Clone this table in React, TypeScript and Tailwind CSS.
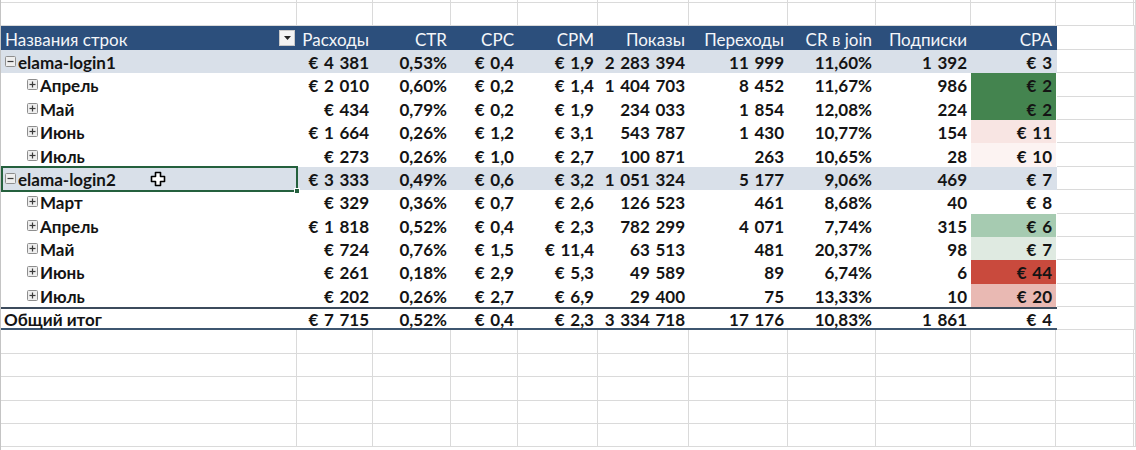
import React from "react";

const W = [
  "w-[296px]",
  "w-[76px]",
  "w-[78px]",
  "w-[67px]",
  "w-[80px]",
  "w-[91px]",
  "w-[99px]",
  "w-[88px]",
  "w-[95px]",
  "w-[85px]",
];

type Row = {
  label: string;
  level: 0 | 1 | 2;
  vals: string[];
  cpa?: string;
};

const n = (s: string) => s.replace(/ (?=\d)/g, "\u2004");

const ROWS: Row[] = [
  { label: "elama-login1", level: 0, vals: ["€ 4 381", "0,53%", "€ 0,4", "€ 1,9", "2 283 394", "11 999", "11,60%", "1 392", "€ 3"] },
  { label: "Апрель", level: 1, vals: ["€ 2 010", "0,60%", "€ 0,2", "€ 1,4", "1 404 703", "8 452", "11,67%", "986", "€ 2"], cpa: "bg-[#44844f]" },
  { label: "Май", level: 1, vals: ["€ 434", "0,79%", "€ 0,2", "€ 1,9", "234 033", "1 854", "12,08%", "224", "€ 2"], cpa: "bg-[#44844f]" },
  { label: "Июнь", level: 1, vals: ["€ 1 664", "0,26%", "€ 1,2", "€ 3,1", "543 787", "1 430", "10,77%", "154", "€ 11"], cpa: "bg-[#f8e5e3]" },
  { label: "Июль", level: 1, vals: ["€ 273", "0,26%", "€ 1,0", "€ 2,7", "100 871", "263", "10,65%", "28", "€ 10"], cpa: "bg-[#fcf3f2]" },
  { label: "elama-login2", level: 0, vals: ["€ 3 333", "0,49%", "€ 0,6", "€ 3,2", "1 051 324", "5 177", "9,06%", "469", "€ 7"] },
  { label: "Март", level: 1, vals: ["€ 329", "0,36%", "€ 0,7", "€ 2,6", "126 523", "461", "8,68%", "40", "€ 8"] },
  { label: "Апрель", level: 1, vals: ["€ 1 818", "0,52%", "€ 0,4", "€ 2,3", "782 299", "4 071", "7,74%", "315", "€ 6"], cpa: "bg-[#a6cbb1]" },
  { label: "Май", level: 1, vals: ["€ 724", "0,76%", "€ 1,5", "€ 11,4", "63 513", "481", "20,37%", "98", "€ 7"], cpa: "bg-[#dfeae1]" },
  { label: "Июнь", level: 1, vals: ["€ 261", "0,18%", "€ 2,9", "€ 5,3", "49 589", "89", "6,74%", "6", "€ 44"], cpa: "bg-[#c94a3d]" },
  { label: "Июль", level: 1, vals: ["€ 202", "0,26%", "€ 2,7", "€ 6,9", "29 400", "75", "13,33%", "10", "€ 20"], cpa: "bg-[#e9b9b3]" },
];

const TOTAL = ["€ 7 715", "0,52%", "€ 0,4", "€ 2,3", "3 334 718", "17 176", "10,83%", "1 861", "€ 4"];

const HEADERS = ["Расходы", "CTR", "CPC", "CPM", "Показы", "Переходы", "CR в join", "Подписки", "CPA"];

function Grid({ w }: { w: string }) {
  return <div className={`${w} h-full shrink-0 border-r border-b border-[#dadada]`} />;
}

function Trail() {
  return (
    <>
      <Grid w="w-[78px]" />
      <Grid w="flex-1" />
    </>
  );
}

function EmptyRow({ h = "h-[23.4px]" }: { h?: string }) {
  return (
    <div className={`flex ${h}`}>
      {W.map((w, i) => (
        <Grid key={i} w={w} />
      ))}
      <Trail />
    </div>
  );
}

function Box({ plus }: { plus?: boolean }) {
  return (
    <svg width="11" height="11" viewBox="0 0 11 11" className="shrink-0">
      <rect x="0.5" y="0.5" width="10" height="10" rx="1" fill="#eeeeee" stroke="#8e8e8e" />
      <line x1="2.5" y1="5.5" x2="8.5" y2="5.5" stroke="#3a3a3a" strokeWidth="1.2" />
      {plus && <line x1="5.5" y1="2.5" x2="5.5" y2="8.5" stroke="#3a3a3a" strokeWidth="1.2" />}
    </svg>
  );
}

function DataRow({ row }: { row: Row }) {
  const group = row.level === 0;
  return (
    <div className="flex h-[23.4px]">
      <div className={`flex w-[1056px] shrink-0 h-full ${group ? "bg-[#d9e0e9]" : "bg-white"}`}>
        <div className={`${W[0]} shrink-0 flex items-center ${group ? "pl-[4px]" : "pl-[26px]"} gap-[2px]`}>
          <Box plus={!group} />
          <span className="pt-[2px]">{row.label}</span>
        </div>
        {row.vals.map((v, i) => (
          <div
            key={i}
            className={`${W[i + 1]} shrink-0 flex items-center justify-end pr-[4px] pt-[2px] ${i === 8 && row.cpa ? row.cpa : ""}`}
          >
            {n(v)}
          </div>
        ))}
      </div>
      <Trail />
    </div>
  );
}

export default function App() {
  return (
    <div className="relative w-[1136px] h-[450px] overflow-hidden bg-white border-l border-[#c4c4c4] font-['Lato','Open_Sans',sans-serif] text-[17px] font-bold text-[#141414] leading-none">
      <EmptyRow h="h-[3px]" />
      <EmptyRow />
      {/* header */}
      <div className="flex h-[23.4px]">
        <div className="flex w-[1056px] shrink-0 h-full bg-[#2c4f7c] text-[#f4f6f9] font-normal">
          <div className={`${W[0]} shrink-0 flex items-center justify-between pl-[4px] pr-[2px]`}>
            <span className="pt-[2px]">Названия строк</span>
            <div className="w-[16px] h-[16px] bg-[#f3f3f3] border border-[#c9c9c9] flex items-center justify-center">
              <svg width="7" height="4" viewBox="0 0 7 4">
                <polygon points="0,0 7,0 3.5,4" fill="#222" />
              </svg>
            </div>
          </div>
          {HEADERS.map((h, i) => (
            <div key={i} className={`${W[i + 1]} shrink-0 flex items-center justify-end pr-[4px] pt-[2px]`}>
              {h}
            </div>
          ))}
        </div>
        <Trail />
      </div>
      {ROWS.map((r, i) => (
        <DataRow key={i} row={r} />
      ))}
      {/* total */}
      <div className="flex h-[23.4px]">
        <div className="flex w-[1056px] shrink-0 h-full bg-white border-t-2 border-b-2 border-t-[#3c4b5c] border-b-[#3e5670]">
          <div className={`${W[0]} shrink-0 flex items-center pl-[3px] pt-[1px]`}>Общий итог</div>
          {TOTAL.map((v, i) => (
            <div key={i} className={`${W[i + 1]} shrink-0 flex items-center justify-end pr-[4px] pt-[1px]`}>
              {n(v)}
            </div>
          ))}
        </div>
        <Trail />
      </div>
      <EmptyRow />
      <EmptyRow />
      <EmptyRow />
      <EmptyRow />
      <EmptyRow />

      {/* selection */}
      <div className="absolute left-0 top-[166px] w-[297px] h-[26px] border-2 border-[#24603d]">
        <div className="absolute right-[-4px] bottom-[-4px] w-[6px] h-[6px] bg-[#24603d] border border-white" />
      </div>
      {/* cursor */}
      <svg className="absolute left-[149px] top-[171px]" width="16" height="16" viewBox="0 0 16 16">
        <path
          d="M5.5 1.5 H10.5 V5.5 H14.5 V10.5 H10.5 V14.5 H5.5 V10.5 H1.5 V5.5 H5.5 Z"
          fill="#fff"
          stroke="#000"
          strokeWidth="1.6"
          strokeLinejoin="round"
        />
      </svg>
    </div>
  );
}
